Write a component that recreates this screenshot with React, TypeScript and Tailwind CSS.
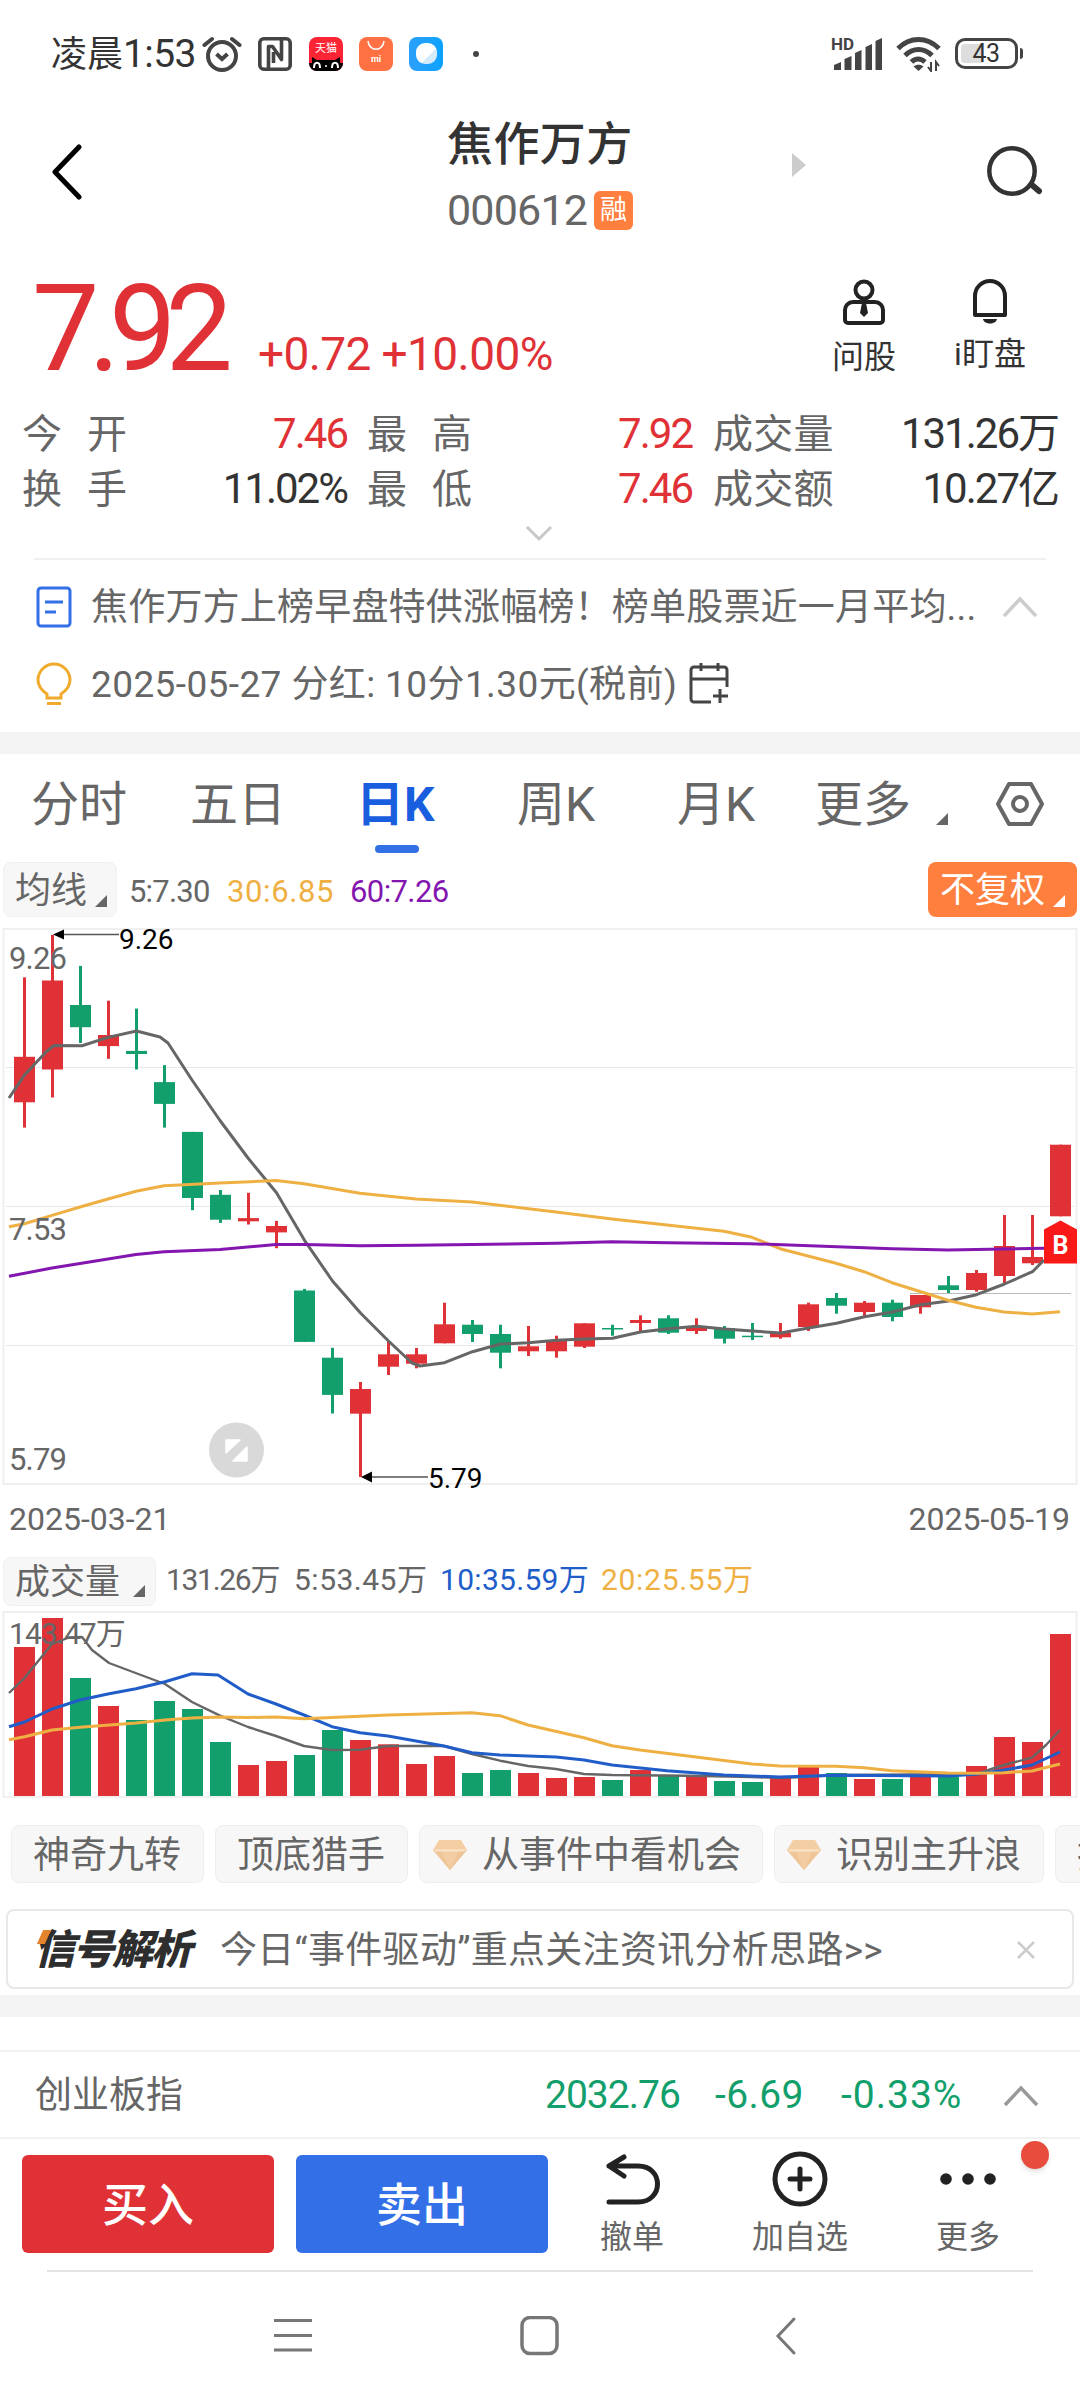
import type { ReactNode } from "react";

const RED = "#e03236";
const GREEN = "#129f6b";

// [high, body top, body bottom, low, volume bar top]
const candles: [string, number, number, number, number, number][] = [
  ["r", 977.3, 1056.8, 1102.3, 1127.6, 1647],
  ["r", 935, 980.5, 1069.5, 1097.5, 1618],
  ["g", 965.9, 1005, 1027.2, 1043, 1678],
  ["r", 1000.7, 1035, 1046.1, 1058.8, 1706],
  ["g", 1008.6, 1050.9, 1054, 1069.5, 1720],
  ["g", 1065.1, 1082.1, 1103.9, 1127.6, 1701],
  ["g", 1131.9, 1131.9, 1198, 1210.2, 1709],
  ["g", 1190, 1194.8, 1219.7, 1222.9, 1742],
  ["r", 1192.8, 1218.1, 1221.3, 1224.5, 1765],
  ["r", 1220.9, 1226, 1232.4, 1248.2, 1761],
  ["g", 1288.9, 1290.5, 1341.9, 1341.9, 1755],
  ["g", 1347.8, 1357.7, 1394.9, 1413.5, 1730],
  ["r", 1382, 1389, 1413.7, 1477, 1740],
  ["r", 1341.7, 1354.3, 1366.7, 1375, 1744.3],
  ["r", 1348, 1354.3, 1363.7, 1368.3, 1764],
  ["r", 1302.7, 1324.3, 1343.3, 1343.3, 1756],
  ["g", 1320, 1324.7, 1334, 1342, 1773],
  ["g", 1324.7, 1334, 1352.7, 1368.3, 1770],
  ["r", 1326, 1346.3, 1351.3, 1356, 1773],
  ["r", 1335.7, 1340, 1351.3, 1357.7, 1778],
  ["r", 1323.3, 1323.3, 1346.7, 1348, 1777],
  ["g", 1324.7, 1328, 1329.5, 1335.7, 1780],
  ["r", 1315.3, 1320, 1323, 1332.3, 1770],
  ["g", 1315.3, 1318.3, 1332.7, 1334, 1775],
  ["r", 1318.3, 1326.7, 1331, 1334, 1777],
  ["g", 1326, 1328, 1338.7, 1343.5, 1781],
  ["g", 1323, 1335.7, 1337.2, 1340, 1782],
  ["r", 1323, 1333, 1337.3, 1338.7, 1778],
  ["r", 1302.7, 1304.3, 1327, 1331, 1767],
  ["g", 1293, 1298, 1305.7, 1313.7, 1773],
  ["r", 1301, 1302.7, 1312, 1316, 1779],
  ["g", 1299.7, 1302.7, 1317, 1321.3, 1779],
  ["r", 1295, 1295, 1307.3, 1313.7, 1777],
  ["g", 1276, 1285.3, 1290, 1293, 1776.7],
  ["r", 1270, 1273, 1290, 1291.7, 1766],
  ["r", 1215, 1246, 1276, 1284, 1737],
  ["r", 1215, 1257, 1263.3, 1265, 1742],
  ["r", 1144.7, 1144.7, 1216.3, 1216.3, 1634],
];

const ma5 =
  "9,1098 24.5,1075 46,1052 54,1045.5 82,1045.7 108,1037.4 136.5,1031 160,1037 168,1043 192,1080 220,1120.5 248,1158 276.5,1192.8 304.5,1240.3 332.5,1281 360.5,1313 388.5,1341 412,1363 420,1366 444.5,1362.7 472.5,1351.7 500.5,1344 528.5,1342.7 556.5,1340.3 584.5,1339 612.5,1338.3 640.5,1332 668.5,1328.7 696.5,1326.3 724.5,1329 752.5,1331 780.5,1333 808.5,1328 836.5,1323.3 864.5,1316.7 892.5,1312 920.5,1304.7 948.5,1301 976.5,1294.7 1004.5,1284 1032.5,1271.7 1044,1260";
const ma30 =
  "9,1226.8 24.5,1223.7 52,1215.4 80,1207 108,1199 136,1191.2 164,1185.7 220,1183 276,1180.6 304,1183.7 332,1188.5 360,1193.2 416,1199 472,1202 556,1212 612,1219 724,1231.3 752,1237.3 780,1248.7 836,1263.3 864,1271.7 892,1282.7 948,1300.3 976,1307.3 1004,1312 1032,1314 1060,1311.7";
const ma60 =
  "9,1276.3 52,1268 136,1254.5 164,1251.7 220,1249.4 276,1244.6 304,1244.6 360,1245.8 416,1245.3 556,1243.3 612,1241.7 668,1242.7 750,1243.7 892,1248.7 948,1250 1044,1248.3";

const vol5 =
  "9,1693 24.5,1678 52,1644 69,1637.5 82,1637 92,1650 109,1663 165,1684 192,1702 220,1715.7 248,1727 276,1736 304,1746 332,1750 360,1749.7 388,1746 444,1746 472,1754 500,1760.7 528,1766 556,1769 584,1774 612,1775 689,1775.7 752,1777 780,1778 808,1776.7 836,1775 948,1774.3 976,1774 1004,1765 1032,1757.7 1046,1745 1060,1730";
const vol10 =
  "9,1726.7 24.5,1722 52,1709 80,1700 109,1693.7 136,1688.7 165,1681.7 192,1673.7 218,1675 248,1694 276,1704 304,1715 332,1726.7 360,1732.7 388,1736 416,1741 444,1746 472,1752.7 500,1755 528,1756 556,1757 584,1760 612,1765 667,1770.7 724,1775 780,1777 836,1775.3 948,1776 976,1774.3 1004,1770 1032,1765 1060,1752";
const vol20 =
  "9,1739.7 24.5,1736.7 52,1730 80,1727.3 136,1723 165,1720 192,1718 220,1717 248,1717.5 276,1717 304,1718.7 332,1717.5 388,1715 472,1712.7 500,1715.7 528,1725 584,1737.7 612,1745.7 640,1750 696,1757 752,1764 780,1766 836,1766.3 864,1767.7 892,1770.7 948,1773 976,1773.3 1004,1772.7 1032,1771 1060,1764";

function Line({ points, color, width = 3 }: { points: string; color: string; width?: number }) {
  return (
    <polyline points={points} fill="none" stroke={color} strokeWidth={width} strokeLinejoin="round" />
  );
}

function Corner({ className = "" }: { className?: string }) {
  return (
    <svg viewBox="0 0 12 12" className={`size-3 shrink-0 ${className}`}>
      <path d="M12 0v12H0z" fill="currentColor" />
    </svg>
  );
}

function StatusBar() {
  return (
    <div className="flex h-[107px] items-center pl-[51px] pr-[57px] text-[#333]">
      <span className="w-[151px] whitespace-nowrap pt-0.5 text-[36px]">
        凌晨<span className="text-[39px] tracking-[-0.6px]">1:53</span>
      </span>
      <svg viewBox="0 0 40 36" className="h-9 w-10" fill="none" stroke="#444" strokeWidth="4">
        <circle cx="20" cy="20" r="14" />
        <path d="M2.500 9 10 3M37.500 9 30 3" strokeLinecap="round" />
        <path d="M14.500 18l5.500 5 5.500-5" />
      </svg>
      <svg viewBox="0 0 34 34" className="ml-4 size-[34px]" fill="none" stroke="#444" strokeWidth="3.600">
        <rect x="1.800" y="1.800" width="30.400" height="30.400" rx="4" />
        <path d="M10.500 31V9.500h4l9 13V3M15.500 15v11" strokeLinejoin="round" />
      </svg>
      <div className="ml-[17px] flex size-[34px] flex-col items-center overflow-hidden rounded-lg bg-[#fb2434] text-white">
        <span className="mt-1 text-[11px] leading-[16px]">天猫</span>
        <svg viewBox="0 0 34 14" className="h-[14px] w-[34px]">
          <path d="M3 0l5 3h18l5-3v14H3zM0 6h34v8H0z" fill="#000" />
          <path d="M5 11c0-7 6-7 6 0M23 11c0-7 6-7 6 0" fill="none" stroke="#fff" strokeWidth="2" />
          <circle cx="17" cy="9" r="1" fill="#fff" />
        </svg>
      </div>
      <div className="ml-4 flex size-[34px] flex-col items-center rounded-lg bg-[#ff7043] text-white">
        <svg viewBox="0 0 18 10" className="mt-1 h-[10px] w-[18px]" fill="none" stroke="#fff" strokeWidth="1.600">
          <path d="M1 0c1 11 15 11 16 0" />
        </svg>
        <span className="mt-0.5 text-[9px] font-bold leading-[12px]">mi</span>
      </div>
      <div className="ml-4 flex size-[34px] items-center justify-center rounded-lg bg-gradient-to-r from-[#2aa0fb] to-[#08a2ff]">
        <div className="size-[21px] rounded-[9px] bg-gradient-to-br from-white from-60% to-[#d5ebfa] to-60%" />
      </div>
      <div className="ml-[30px] size-1.5 rounded-full bg-[#444]" />
      <div className="ml-auto flex items-center">
        <svg viewBox="0 0 52 36" className="h-9 w-[52px] overflow-visible" fill="#444">
          <text x="0" y="14" className="text-[17px] font-bold">HD</text>
          <path d="M3 34v-5l7-3v8zM13.500 34V23l7-3v14zM24 34V17l6.500-3v20zM34.500 34V11l6.500-3v26zM44.500 34V5l6.500-3v32z" />
        </svg>
        <svg viewBox="0 0 48 36" className="ml-3 h-9 w-12" fill="none" stroke="#444" strokeWidth="5">
          <path d="M3 12.500c12-12 29-12 41 0" />
          <path d="M10 19.500c8-8 19-8 27 0" />
          <path d="M16.500 26c4-4 9-4 13.500 0" />
          <path d="M18.500 30.500c3-2.500 7-2.500 10 0l-5 4.500z" fill="#444" stroke="none" />
          <path d="M36 26v9l-3-4M41 35v-9l3 4" strokeWidth="2" />
        </svg>
        <div className="ml-3 flex h-[31px] w-[63px] items-center rounded-[10px] border-[3.5px] border-[#444] pl-[3px]">
          <div className="flex h-[19px] w-[50px] items-center justify-center rounded bg-gradient-to-r from-[#ddd] from-43% to-white to-43% text-[25px] tracking-[-0.5px]">
            43
          </div>
        </div>
        <div className="ml-0.5 h-[11px] w-[3px] rounded-r bg-[#444]" />
      </div>
    </div>
  );
}

function Header() {
  return (
    <div className="flex h-[147px] items-start justify-between pl-[50px] pr-[36px]">
      <svg viewBox="0 0 34 56" className="mt-[37px] h-14 w-[34px]" fill="none" stroke="#000" strokeWidth="5">
        <path d="M29 3 5 28l24 25" strokeLinecap="round" strokeLinejoin="round" />
      </svg>
      <div className="ml-[363px] w-[191px]">
        <div className="mt-[5px] whitespace-nowrap text-[46px] font-medium leading-[64px] tracking-[0.4px] text-[#333]">焦作万方</div>
        <div className="mt-[12px] flex items-center">
          <span className="w-[147px] text-[43px] leading-[44px] tracking-[-0.8px] text-[#666]">000612</span>
          <span className="flex size-[39px] items-center justify-center rounded-md bg-[#ff7f3f] text-[27px] text-white">
            融
          </span>
        </div>
      </div>
      <svg viewBox="0 0 14 24" className="ml-[154px] mt-[46px] h-6 w-3.5" fill="#ccc">
        <path d="M0 0l14 12L0 24z" />
      </svg>
      <svg viewBox="0 0 58 54" className="ml-auto mt-[37px] h-[54px] w-[58px]" fill="none" stroke="#333" strokeWidth="4.500">
        <circle cx="26" cy="27" r="22.700" />
        <path d="M46 41l7 6" strokeWidth="6" strokeLinecap="round" />
      </svg>
    </div>
  );
}

function Quote() {
  return (
    <div className="flex h-[136px] justify-between pl-[32px] pr-[52px]">
      <div className="flex items-baseline text-[#e03236]">
        <span className="w-[226px] text-[120px] leading-[150px] tracking-[-11px]">7.92</span>
        <span className="whitespace-nowrap text-[46px] tracking-[-0.6px]">+0.72 +10.00%</span>
      </div>
      <div className="flex text-[32px] leading-[40px] text-[#333]">
        <div className="flex w-[68px] flex-col items-center">
          <svg viewBox="0 0 42 46" className="mt-[25px] h-[46px] w-[42px]" fill="none" stroke="#222" strokeWidth="4">
            <circle cx="21" cy="11" r="8.500" />
            <path d="M10 23h22a8 8 0 0 1 8 8v10a3 3 0 0 1-3 3H5a3 3 0 0 1-3-3V31a8 8 0 0 1 8-8z" />
            <path d="M19 24h4l2 10-4 4-4-4z" fill="#222" stroke="none" />
          </svg>
          <span className="mt-[12px] whitespace-nowrap">问股</span>
        </div>
        <div className="ml-[54px] flex w-[76px] flex-col items-center">
          <svg viewBox="0 0 36 46" className="mt-[25px] h-[46px] w-9" fill="none" stroke="#222" strokeWidth="4">
            <path d="M3 36V17a15 15 0 0 1 30 0v19z" strokeLinejoin="round" />
            <path d="M11 40h14c-1 6-13 6-14 0z" fill="#222" stroke="none" />
          </svg>
          <span className="mt-[9px] whitespace-nowrap">i盯盘</span>
        </div>
      </div>
    </div>
  );
}

const stats = [
  ["今开", "7.46", true, "最高", "7.92", "成交量", "131.26万"],
  ["换手", "11.02%", false, "最低", "7.46", "成交额", "10.27亿"],
] as const;

function Stats() {
  return (
    <div className="h-[168px] pt-[16px]">
      {stats.map(([a, av, up, b, bv, c, cv]) => (
        <div key={a} className="flex h-[55px] items-baseline whitespace-nowrap pl-[22px] pr-[22px] text-[40px] leading-[55px] text-[#333]">
          <span className="w-[130px] tracking-[25px] text-[#666]">{a}</span>
          <span className={`w-[195px] text-right text-[42px] tracking-[-2px] ${up ? "text-[#e03236]" : ""}`}>{av}</span>
          <span className="ml-[20px] w-[130px] tracking-[25px] text-[#666]">{b}</span>
          <span className="w-[195px] text-right text-[42px] tracking-[-2px] text-[#e03236]">{bv}</span>
          <span className="ml-[21px] tracking-[0.3px] text-[#666]">{c}</span>
          <span className="ml-auto text-[42px] tracking-[-2px]">{cv}</span>
        </div>
      ))}
      <svg viewBox="0 0 28 18" className="ml-[525px] mt-[9px] h-[18px] w-7" fill="none" stroke="#c8c8c8" strokeWidth="3">
        <path d="M2 2l12 12L26 2" />
      </svg>
    </div>
  );
}

function Notices() {
  return (
    <div className="mx-[34px] h-[174px] border-t-2 border-[#f0f0f0] text-[37px] text-[#666]">
      <div className="flex h-[94px] items-center whitespace-nowrap">
        <svg viewBox="0 0 36 42" className="ml-0.5 h-[42px] w-9" fill="none" stroke="#3370e6" strokeWidth="3">
          <rect x="2" y="2" width="32" height="38" rx="3" />
          <path d="M9 16h18M9 26h11" />
        </svg>
        <span className="ml-[19px] w-[901px] tracking-[0.2px]">焦作万方上榜早盘特供涨幅榜！榜单股票近一月平均...</span>
        <svg viewBox="0 0 36 22" className="ml-[10px] h-[22px] w-9" fill="none" stroke="#ccc" strokeWidth="3.500">
          <path d="M2 20 18 3l16 17" />
        </svg>
      </div>
      <div className="flex h-[60px] items-center whitespace-nowrap">
        <svg viewBox="0 0 36 44" className="ml-0.5 h-11 w-9" fill="none" stroke="#f0ab2c" strokeWidth="3">
          <path d="M11 36v-4C5 28 2 24 2 18a16 16 0 0 1 32 0c0 6-3 10-9 14v4zM11 41.500h14" />
        </svg>
        <span className="ml-[19px] w-[583px] tracking-[0.4px]">2025-05-27 分红: 10分1.30元(税前)</span>
        <svg viewBox="0 0 40 42" className="ml-[15px] h-[42px] w-10" fill="none" stroke="#444" strokeWidth="3">
          <path d="M22 39H5a3 3 0 0 1-3-3V7a3 3 0 0 1 3-3h30a3 3 0 0 1 3 3v17M2 16h36M12 0v8M29 0v8M31 26v14M24 33h15" />
        </svg>
      </div>
    </div>
  );
}

function Tabs() {
  return (
    <div className="flex h-[107px] whitespace-nowrap pl-[31px] text-[48px] leading-[101px] text-[#666]">
      <span className="w-[159px]">分时</span>
      <span className="w-[166px]">五日</span>
      <div className="flex w-[161px] flex-col font-bold text-[#1a5ee0]">
        <span className="h-[91px]">日K</span>
        <span className="ml-[19px] h-2 w-11 rounded-full bg-[#3370e6]" />
      </div>
      <span className="w-[160px]">周K</span>
      <span className="w-[138px]">月K</span>
      <span className="w-[121px]">更多</span>
      <Corner className="mt-[59px]" />
      <svg viewBox="0 0 48 44" className="ml-[48px] mt-[28px] h-11 w-12" fill="none" stroke="#666" strokeWidth="4">
        <path d="M13 2h22l11 20-11 20H13L2 22z" strokeLinejoin="round" />
        <circle cx="24" cy="22" r="7" />
      </svg>
    </div>
  );
}

function MaBar() {
  return (
    <div className="flex h-[67px] items-start whitespace-nowrap px-[3px] pt-px text-[31px] leading-[60px]">
      <div className="flex h-[55px] w-[114px] items-center rounded-lg border border-[#f0f0f0] bg-[#f7f7f7] pl-[11px] pt-0.5 text-[36px] text-[#666]">
        均线
        <Corner className="ml-2 mt-5" />
      </div>
      <span className="ml-[12px] w-[98px] tracking-[-0.8px] text-[#666]">5:7.30</span>
      <span className="w-[123px] tracking-[0.6px] text-[#efb043]">30:6.85</span>
      <span className="tracking-[-0.6px] text-[#8416b0]">60:7.26</span>
      <div className="ml-auto flex h-[55px] w-[149px] items-center rounded-lg bg-[#ff7f3f] pl-3 pt-0.5 text-[35px] text-white">
        不复权
        <Corner className="ml-2 mt-5" />
      </div>
    </div>
  );
}

function PriceChart() {
  return (
    <svg viewBox="0 928 1080 557" className="block h-[557px] w-full overflow-visible">
      <rect x="3.500" y="929" width="1073" height="555" fill="none" stroke="#f0f0f0" strokeWidth="2" />
      <path d="M6 1067.500h1068M6 1206.500h1068M6 1345.500h1068" stroke="#e8e8e8" />
      <path d="M910 1293.500h161" stroke="#bbb" />
      {candles.map(([dir, high, top, bottom, low], i) => {
        const x = 24.5 + i * 28;
        const fill = dir === "r" ? RED : GREEN;
        return (
          <g key={i} fill={fill}>
            <rect x={x - 1.5} y={high} width={3} height={low - high} />
            <rect x={x - 10.5} y={top} width={21} height={bottom - top} />
          </g>
        );
      })}
      <Line points={ma5} color="#666" />
      <Line points={ma30} color="#efb043" />
      <Line points={ma60} color="#8416b0" />
      <g fill="#666" className="text-[31px] tracking-[-0.8px]">
        <text x="9" y="969">9.26</text>
        <text x="9" y="1240">7.53</text>
        <text x="9" y="1470">5.79</text>
      </g>
      <path d="M62 934.500h57M370 1477h58" stroke="#555" strokeWidth="1.500" />
      <path d="M53 934.500l11-5v10zM361 1477l11-5.500v11z" />
      <g className="text-[28px]">
        <text x="119" y="949">9.26</text>
        <text x="428" y="1488">5.79</text>
      </g>
      <circle cx="236.500" cy="1450" r="27.500" fill="#d9d9d9" />
      <path d="M226 1440h14l-14 13zM247 1461h-14l14-14z" fill="#fff" stroke="#fff" strokeWidth="1.500" strokeLinejoin="round" />
      <path d="M1060.500 1220.500l16.500 9v34h-33v-34z" fill="#fa1919" />
      <text x="1060.500" y="1254" textAnchor="middle" fill="#fff" className="text-[25px] font-bold">B</text>
    </svg>
  );
}

function VolumeBar() {
  return (
    <div className="flex h-[54px] items-start whitespace-nowrap px-[3px] text-[30px] leading-[46px]">
      <div className="flex h-[49px] w-[153px] items-center rounded-lg border border-[#f0f0f0] bg-[#f7f7f7] pl-[11px] pt-0.5 text-[35px] text-[#666]">
        成交量
        <Corner className="ml-[13px] mt-4" />
      </div>
      <span className="ml-[10px] w-[128px] tracking-[-1.3px] text-[#666]">131.26万</span>
      <span className="w-[146px] tracking-[0.5px] text-[#666]">5:53.45万</span>
      <span className="w-[161px] tracking-[0.3px] text-[#205dc9]">10:35.59万</span>
      <span className="tracking-[0.7px] text-[#efb043]">20:25.55万</span>
    </div>
  );
}

function VolumeChart() {
  return (
    <svg viewBox="0 1611 1080 187" className="block h-[187px] w-full overflow-visible">
      <rect x="3.500" y="1612" width="1073" height="185" fill="none" stroke="#f0f0f0" strokeWidth="2" />
      {candles.map(([dir, , , , , top], i) => (
        <rect key={i} x={14 + i * 28} y={top} width={21} height={1796 - top} fill={dir === "r" ? RED : GREEN} />
      ))}
      <text x="9" y="1644" fill="#666" className="text-[30px] tracking-[-0.9px]">143.47万</text>
      <Line points={vol5} color="#666" width={2.4} />
      <Line points={vol10} color="#205dc9" />
      <Line points={vol20} color="#efb043" />
    </svg>
  );
}

function Gem() {
  return (
    <svg viewBox="0 0 34 30" className="mr-[15px] h-[30px] w-[34px]">
      <path d="M6 0h22l6 10-17 20L0 10z" fill="#f5cfa4" />
      <path d="M0 10h34L17 30z" fill="#efc496" />
      <path d="M8 10h18l-9 20z" fill="#f2cda3" />
      <path d="M1 9.500h32l-1.500 2h-29z" fill="#fae3c8" />
    </svg>
  );
}

function Pill({ children, className = "" }: { children: ReactNode; className?: string }) {
  return (
    <div className={`flex h-[58px] shrink-0 items-center rounded-lg border border-[#eee] bg-[#f7f7f7] pt-0.5 ${className}`}>
      {children}
    </div>
  );
}

function Tools() {
  return (
    <div className="mt-[27px] flex gap-[11px] overflow-hidden whitespace-nowrap pl-[11px] text-[37px] text-[#666]">
      <Pill className="w-[193px] pl-[21px]">神奇九转</Pill>
      <Pill className="w-[193px] pl-[21px]">顶底猎手</Pill>
      <Pill className="w-[344px] pl-[13px]"><Gem />从事件中看机会</Pill>
      <Pill className="w-[270px] pl-[12px]"><Gem />识别主升浪</Pill>
      <Pill className="w-[193px] pl-[21px]">抄底</Pill>
    </div>
  );
}

function SignalCard() {
  return (
    <div className="mx-[6px] mt-[26px] flex h-[80px] items-center whitespace-nowrap rounded-lg border-2 border-[#e8e8e8] pl-[26px] pr-[37px] pt-0.5">
      <span className="relative w-[186px] text-[41px] font-black italic tracking-[-2px] text-[#2e2e2e]">
        信号解析
        <span className="absolute left-[6px] top-0 h-[14px] w-[8px] -skew-x-[24deg] bg-[#e5832c]" />
      </span>
      <span className="text-[37px] tracking-[0.3px] text-[#666]">今日“事件驱动”重点关注资讯分析思路&gt;&gt;</span>
      <svg viewBox="0 0 18 18" className="ml-auto size-[18px]" stroke="#ccc" strokeWidth="2.500">
        <path d="M1 1l16 16M17 1 1 17" />
      </svg>
    </div>
  );
}

function IndexRow() {
  return (
    <div className="flex h-[89px] items-center whitespace-nowrap border-y-2 border-[#f2f2f2] pl-[35px] pt-0.5 text-[37px] text-[#666]">
      <span className="w-[510px]">创业板指</span>
      <div className="flex text-[39px] text-[#129f6b]">
        <span className="w-[170px] tracking-[-1px]">2032.76</span>
        <span className="w-[126px] tracking-[0.4px]">-6.69</span>
        <span className="w-[162px] tracking-[1px]">-0.33%</span>
      </div>
      <svg viewBox="0 0 36 22" className="h-[22px] w-9" fill="none" stroke="#999" strokeWidth="3.500">
        <path d="M2 20 18 3l16 17" />
      </svg>
    </div>
  );
}

function Action({ label, className, children }: { label: string; className: string; children: ReactNode }) {
  return (
    <div className={`flex flex-col items-center ${className}`}>
      {children}
      <span className="mt-1 whitespace-nowrap leading-[48px]">{label}</span>
    </div>
  );
}

function TradeBar() {
  return (
    <div className="relative flex h-[131px] items-start pl-[22px] pt-[10px] text-[32px] text-[#666]">
      <div className="mt-1.5 flex h-[98px] w-[252px] items-center justify-center rounded-md bg-[#e03236] pt-0.5 text-[46px] font-medium text-white">
        买入
      </div>
      <div className="ml-[22px] mt-1.5 flex h-[98px] w-[252px] items-center justify-center rounded-md bg-[#336fe6] pt-0.5 text-[46px] font-medium text-white">
        卖出
      </div>
      <Action label="撤单" className="ml-[44px] w-20">
        <svg viewBox="0 0 56 60" className="h-[60px] w-14" fill="none" stroke="#222" strokeWidth="5" strokeLinecap="round">
          <path d="M5 17h29c26 0 26 36 0 36H5M20 8 5 17l15 10" strokeLinejoin="round" />
        </svg>
      </Action>
      <Action label="加自选" className="ml-[78px] w-[100px]">
        <svg viewBox="0 0 58 60" className="h-[60px] w-[58px]" fill="none" stroke="#222" strokeWidth="5">
          <circle cx="29" cy="30" r="25" />
          <path d="M29 20v20M19 30h20" strokeLinecap="round" />
        </svg>
      </Action>
      <Action label="更多" className="ml-[78px] w-20">
        <svg viewBox="0 0 60 60" className="h-[60px] w-[60px]" fill="#222">
          <circle cx="8" cy="30" r="5.800" />
          <circle cx="30" cy="30" r="5.800" />
          <circle cx="52" cy="30" r="5.800" />
        </svg>
      </Action>
      <span className="absolute right-[31px] top-0.5 size-7 rounded-full bg-[#e74c3c] shadow-md" />
    </div>
  );
}

function NavBar() {
  return (
    <div className="mx-[47px] flex h-[130px] border-t-2 border-[#e3e3e3] pt-[44px]">
      <svg viewBox="0 0 38 38" className="ml-[227px] size-[38px]" stroke="#777" strokeWidth="3">
        <path d="M0 4.500h38M0 19.500h38M0 34h38" />
      </svg>
      <svg viewBox="0 0 40 40" className="ml-[208px] size-10" fill="none" stroke="#777" strokeWidth="3.500">
        <rect x="2" y="1.500" width="35" height="36" rx="8" />
      </svg>
      <svg viewBox="0 0 22 40" className="ml-[215px] h-10 w-[22px]" fill="none" stroke="#777" strokeWidth="3">
        <path d="M19 3 3 20l16 17" strokeLinecap="round" />
      </svg>
    </div>
  );
}

export default function App() {
  return (
    <div className="h-[2400px] w-[1080px] overflow-hidden bg-white font-[Roboto,'Noto_Sans_CJK_SC',sans-serif] leading-none">
      <StatusBar />
      <Header />
      <Quote />
      <Stats />
      <Notices />
      <div className="h-[22px] bg-[#f4f4f4]" />
      <Tabs />
      <MaBar />
      <PriceChart />
      <div className="flex h-[72px] justify-between pl-[9px] pr-[10px] text-[32px] leading-[68px] text-[#666]">
        <span>2025-03-21</span>
        <span>2025-05-19</span>
      </div>
      <VolumeBar />
      <VolumeChart />
      <Tools />
      <SignalCard />
      <div className="mb-[33px] mt-[6px] h-[22px] bg-[#f4f4f4]" />
      <IndexRow />
      <TradeBar />
      <NavBar />
    </div>
  );
}
